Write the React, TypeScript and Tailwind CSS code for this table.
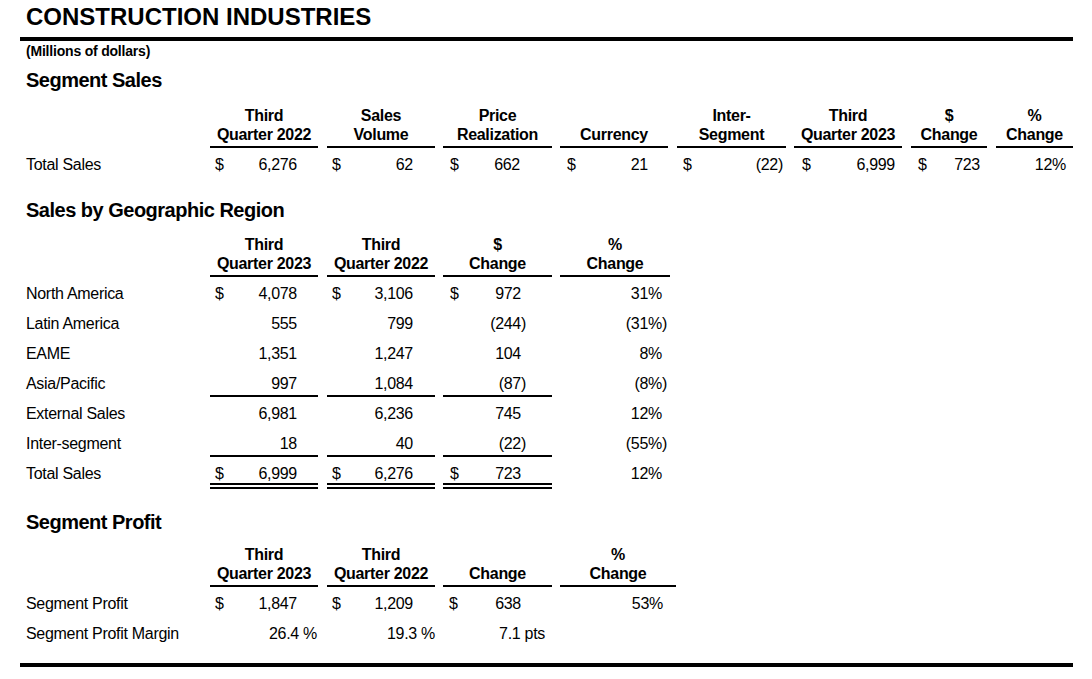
import React from "react";

type Col = { w: string; ml: string; pl: string; pr: string };
type CellDef = { d?: boolean; v: string; hang?: boolean; pr?: string } | null;
type RowDef = { label: string; cells: CellDef[]; kind?: "under" | "total" };

const topCols: Col[] = [
  { w: "w-[108px]", ml: "", pl: "pl-[5px]", pr: "pr-[16px]" },
  { w: "w-[108px]", ml: "ml-[9px]", pl: "pl-[5px]", pr: "pr-[17px]" },
  { w: "w-[109px]", ml: "ml-[8px]", pl: "pl-[7px]", pr: "pr-[27px]" },
  { w: "w-[108px]", ml: "ml-[8px]", pl: "pl-[7px]", pr: "pr-[15px]" },
  { w: "w-[109px]", ml: "ml-[9px]", pl: "pl-[6px]", pr: "pr-[3px]" },
  { w: "w-[108px]", ml: "ml-[8px]", pl: "pl-[8px]", pr: "pr-[2px]" },
  { w: "w-[76px]", ml: "ml-[9px]", pl: "pl-[7px]", pr: "pr-[2px]" },
  { w: "w-[77px]", ml: "ml-[9px]", pl: "", pr: "pr-[2px]" },
];

const geoCols: Col[] = [
  { w: "w-[108px]", ml: "", pl: "pl-[5px]", pr: "pr-[16px]" },
  { w: "w-[108px]", ml: "ml-[9px]", pl: "pl-[5px]", pr: "pr-[17px]" },
  { w: "w-[109px]", ml: "ml-[8px]", pl: "pl-[7px]", pr: "pr-[26px]" },
  { w: "w-[110px]", ml: "ml-[8px]", pl: "", pr: "pr-[3px]" },
];

const profitCols: Col[] = [
  { w: "w-[108px]", ml: "", pl: "pl-[5px]", pr: "pr-[16px]" },
  { w: "w-[108px]", ml: "ml-[9px]", pl: "pl-[5px]", pr: "pr-[17px]" },
  { w: "w-[109px]", ml: "ml-[8px]", pl: "pl-[6px]", pr: "pr-[26px]" },
  { w: "w-[116px]", ml: "ml-[8px]", pl: "", pr: "pr-[8px]" },
];

function HeaderRow({ cols, heads }: { cols: Col[]; heads: string[][] }) {
  return (
    <div className="flex">
      <div className="w-[190px]" />
      {cols.map((c, i) => (
        <div
          key={i}
          className={`${c.w} ${c.ml} flex flex-col items-center justify-end border-b-2 border-black pt-[1px] pb-[2px] text-[16px] leading-[19px] font-bold tracking-[-0.3px]`}
        >
          {heads[i].map((l) => (
            <div key={l}>{l}</div>
          ))}
        </div>
      ))}
    </div>
  );
}

function Row({ row, cols }: { row: RowDef; cols: Col[] }) {
  const h = row.kind === "total" ? "h-[32px]" : "h-[30px]";
  const plain = row.kind === "total" ? "pt-[8px] pb-[6px]" : "pt-[4px]";
  return (
    <div className={`flex ${h}`}>
      <div className={`w-[190px] pl-[6px] flex items-center ${plain}`}>{row.label}</div>
      {cols.map((c, i) => {
        const cell = row.cells[i];
        const lined = !!row.kind && i < 3;
        let lineCls = plain;
        if (row.kind === "under" && lined) lineCls = "border-b-2 border-black pt-[6px]";
        else if (row.kind === "total" && lined)
          lineCls = "border-b-[6px] border-double border-black pt-[8px]";
        const pr = cell && cell.pr ? cell.pr : c.pr;
        const hang = cell ? cell.hang !== false : false;
        return (
          <div key={i} className={`${c.w} ${c.ml} ${c.pl} ${pr} flex items-center ${lineCls}`}>
            <span>{cell && cell.d ? "$" : ""}</span>
            <span className="ml-auto whitespace-pre">
              {cell ? cell.v : ""}
              {cell && hang && !cell.v.endsWith(")") ? <span className="invisible">)</span> : null}
            </span>
          </div>
        );
      })}
    </div>
  );
}

const topRows: RowDef[] = [
  {
    label: "Total Sales",
    cells: [
      { d: true, v: "6,276" },
      { d: true, v: "62" },
      { d: true, v: "662" },
      { d: true, v: "21" },
      { d: true, v: "(22)" },
      { d: true, v: "6,999" },
      { d: true, v: "723" },
      { v: "12%" },
    ],
  },
];

const geoRows: RowDef[] = [
  {
    label: "North America",
    cells: [{ d: true, v: "4,078" }, { d: true, v: "3,106" }, { d: true, v: "972" }, { v: "31%" }],
  },
  { label: "Latin America", cells: [{ v: "555" }, { v: "799" }, { v: "(244)" }, { v: "(31%)" }] },
  { label: "EAME", cells: [{ v: "1,351" }, { v: "1,247" }, { v: "104" }, { v: "8%" }] },
  {
    label: "Asia/Pacific",
    kind: "under",
    cells: [{ v: "997" }, { v: "1,084" }, { v: "(87)" }, { v: "(8%)" }],
  },
  { label: "External Sales", cells: [{ v: "6,981" }, { v: "6,236" }, { v: "745" }, { v: "12%" }] },
  {
    label: "Inter-segment",
    kind: "under",
    cells: [{ v: "18" }, { v: "40" }, { v: "(22)" }, { v: "(55%)" }],
  },
  {
    label: "Total Sales",
    kind: "total",
    cells: [{ d: true, v: "6,999" }, { d: true, v: "6,276" }, { d: true, v: "723" }, { v: "12%" }],
  },
];

const profitRows: RowDef[] = [
  {
    label: "Segment Profit",
    cells: [{ d: true, v: "1,847" }, { d: true, v: "1,209" }, { d: true, v: "638" }, { v: "53%" }],
  },
  {
    label: "Segment Profit Margin",
    cells: [
      { v: "26.4 %", hang: false, pr: "pr-[1px]" },
      { v: "19.3 %", hang: false, pr: "pr-[0px]" },
      { v: "7.1 pts", hang: false, pr: "pr-[7px]" },
      null,
    ],
  },
];

export default function App() {
  return (
    <div className="min-h-screen w-[1092px] bg-white text-black font-['Liberation_Sans',Arial,sans-serif]">
      <div className="w-[1073px] pl-[20px]">
        <div className="pl-[6px] pt-[5px] text-[24px] leading-[24px] font-bold">CONSTRUCTION INDUSTRIES</div>
        <div className="mt-[8px] h-[4px] bg-black" />
        <div className="pl-[6px] mt-[2px] text-[14px] leading-[16px] font-bold tracking-[-0.2px]">
          (Millions of dollars)
        </div>
        <div className="pl-[6px] mt-[9px] text-[20px] leading-[24px] font-bold tracking-[-0.5px]">Segment Sales</div>

        <div className="mt-[13px] text-[16px] tracking-[-0.3px]">
          <HeaderRow
            cols={topCols}
            heads={[
              ["Third", "Quarter 2022"],
              ["Sales", "Volume"],
              ["Price", "Realization"],
              ["Currency"],
              ["Inter-", "Segment"],
              ["Third", "Quarter 2023"],
              ["$", "Change"],
              ["%", "Change"],
            ]}
          />
          {topRows.map((r, i) => (
            <Row key={i} row={r} cols={topCols} />
          ))}
        </div>

        <div className="pl-[6px] mt-[20px] text-[20px] leading-[24px] font-bold tracking-[-0.5px]">
          Sales by Geographic Region
        </div>
        <div className="mt-[12px] text-[16px] tracking-[-0.3px]">
          <HeaderRow
            cols={geoCols}
            heads={[
              ["Third", "Quarter 2023"],
              ["Third", "Quarter 2022"],
              ["$", "Change"],
              ["%", "Change"],
            ]}
          />
          {geoRows.map((r, i) => (
            <Row key={i} row={r} cols={geoCols} />
          ))}
        </div>

        <div className="pl-[6px] mt-[21px] text-[20px] leading-[24px] font-bold tracking-[-0.5px]">Segment Profit</div>
        <div className="mt-[10px] text-[16px] tracking-[-0.3px]">
          <HeaderRow
            cols={profitCols}
            heads={[
              ["Third", "Quarter 2023"],
              ["Third", "Quarter 2022"],
              ["Change"],
              ["%", "Change"],
            ]}
          />
          {profitRows.map((r, i) => (
            <Row key={i} row={r} cols={profitCols} />
          ))}
        </div>
        <div className="mt-[16px] h-[4px] bg-black" />
      </div>
    </div>
  );
}
